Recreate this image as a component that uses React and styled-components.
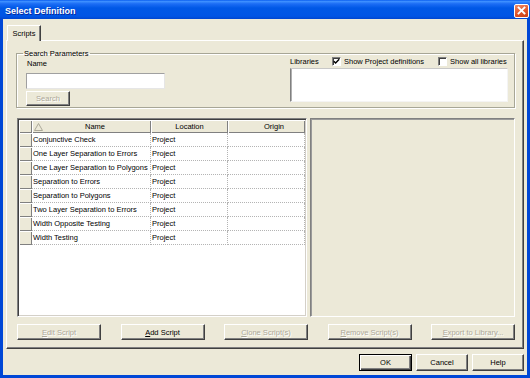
import React from 'react';
import styled, { createGlobalStyle } from 'styled-components';

const Global = createGlobalStyle`
  html, body { margin: 0; padding: 0; }
  body { font-family: "Liberation Sans", Arial, sans-serif; font-size: 7.5px; color: #000; }
  * { box-sizing: border-box; }
`;

const BG = '#ECE9D8';

const Win = styled.div`
  width: 530px;
  height: 378px;
  display: flex;
  flex-direction: column;
  overflow: hidden;
`;

const TitleBar = styled.div`
  height: 19px;
  flex: none;
  display: flex;
  align-items: center;
  justify-content: space-between;
  padding: 2px 1px 0 5px;
  background: linear-gradient(180deg, #0A5EF0 0%, #3D8FFF 8%, #1C6DF5 20%, #0058E6 42%, #0055E5 85%, #0046D0 100%);
`;

const Title = styled.div`
  color: #fff;
  font-weight: bold;
  font-size: 9px;
  text-shadow: 1px 1px 0 #0A2A9C;
`;

const CloseBtn = styled.div`
  width: 15px;
  height: 14px;
  border: 1px solid #fff;
  border-radius: 2px;
  background: linear-gradient(160deg, #F08C68 0%, #E0552A 55%, #C63E14 100%);
  display: flex;
  align-items: center;
  justify-content: center;
`;

const Client = styled.div`
  flex: 1;
  display: flex;
  flex-direction: column;
  background: ${BG};
  border: 3px solid #0047D6;
  border-top: none;
  padding: 6px 3px 4px 3px;
`;

const TabStrip = styled.div`
  display: flex;
  padding-left: 1px;
  flex: none;
`;

const Tab = styled.div`
  position: relative;
  z-index: 1;
  width: 34px;
  height: 16px;
  margin-bottom: -1px;
  background: ${BG};
  border-top: 1px solid #fff;
  border-left: 1px solid #fff;
  border-right: 1px solid #404040;
  box-shadow: inset -1px 0 0 #808080;
  display: flex;
  align-items: center;
  justify-content: center;
  padding-bottom: 1px;
`;

const Panel = styled.div`
  flex: 1;
  display: flex;
  flex-direction: column;
  border: 1px solid;
  border-color: #fff #404040 #404040 #fff;
  box-shadow: inset -1px -1px 0 #808080;
  padding: 8px 8px 8px 9px;
  min-height: 0;
`;

const Group = styled.fieldset`
  margin: 0;
  min-width: 0;
  height: 59px;
  flex: none;
  padding: 0 6px 1px 9px;
  border: 1px solid #A7A696;
  box-shadow: 1px 1px 0 #fff, inset 1px 1px 0 #fff;
  display: flex;
  justify-content: space-between;
  align-items: flex-start;
`;

const Legend = styled.legend`
  font-size: 7.5px;
  line-height: 9px;
  padding: 0 1px;
  margin-left: -3px;
`;

const Col = styled.div`
  display: flex;
  flex-direction: column;
  align-items: flex-start;
  width: ${p => p.$w}px;
`;

const Label = styled.div`
  line-height: 9px;
  margin: 1px 0 0 1px;
`;

const TextInput = styled.div`
  width: 139px;
  height: 16px;
  margin-top: 5px;
  background: #fff;
  border: 1px solid;
  border-color: #A0A0A0 #E6E6E6 #E6E6E6 #A0A0A0;
`;

const LibRow = styled.div`
  height: 10px;
  margin-top: -2px;
  width: 100%;
  display: flex;
  align-items: center;
`;

const LibLabel = styled.span`
  width: 42px;
`;

const CheckWrap = styled.span`
  display: flex;
  align-items: center;
  gap: 3px;
  margin-right: ${p => p.$mr || 0}px;
`;

const Box = styled.span`
  width: 9px;
  height: 9px;
  background: #fff;
  border: 1px solid;
  border-color: #808080 #fff #fff #808080;
  box-shadow: inset 1px 1px 0 #404040;
  display: flex;
  align-items: center;
  justify-content: center;
`;

const ListBox = styled.div`
  width: 218px;
  height: 34px;
  margin-top: 2px;
  background: #fff;
  border: 1px solid;
  border-color: #C8C8C8 #F4F4F4 #F4F4F4 #808080;
  box-shadow: inset 1px 0 0 #B0B0B0;
`;

const Btn = styled.button`
  width: ${p => p.$w}px;
  height: ${p => p.$h || 16}px;
  margin-top: ${p => p.$mt || 0}px;
  padding: 0;
  font-family: inherit;
  font-size: 7.5px;
  background: ${BG};
  border: 1px solid;
  border-color: ${p => (p.$default ? '#000' : '#fff #404040 #404040 #fff')};
  box-shadow: ${p =>
    p.$default
      ? 'inset 1px 1px 0 #fff, inset -1px -1px 0 #404040, inset -2px -2px 0 #808080'
      : 'inset -1px -1px 0 #808080'};
  color: ${p => (p.disabled ? '#ACA899' : '#000')};
  text-shadow: ${p => (p.disabled ? '1px 1px 0 #fff' : 'none')};
  display: flex;
  align-items: center;
  justify-content: center;
  white-space: nowrap;
`;

const GridRow = styled.div`
  flex: 1;
  display: flex;
  gap: 3px;
  margin-top: 10px;
  margin-left: 1px;
  min-height: 0;
`;

const DataGrid = styled.div`
  width: 290px;
  background: #fff;
  border: 1px solid;
  border-color: #808080 #fff #fff #808080;
  box-shadow: inset 1px 1px 0 #404040, inset -1px -1px 0 #D4D0C8;
  padding: 1px;
`;

const Table = styled.div`
  display: grid;
  grid-template-columns: 13px 119px 77px 77px;
  grid-template-rows: 13px;
  grid-auto-rows: 14px;
`;

const HeadCell = styled.div`
  background: ${BG};
  box-shadow: inset 1px 1px 0 #fff, inset -1px -1px 0 #808080;
  display: flex;
  align-items: center;
  justify-content: center;
  padding-left: ${p => p.$pl || 0}px;
  position: relative;
  line-height: 13px;
`;

const SortMark = styled.svg`
  position: absolute;
  left: 2px;
  top: 3px;
`;

const Cell = styled.div`
  border-right: 1px dotted #B4B4B4;
  border-bottom: 1px dotted #B4B4B4;
  padding-left: 1px;
  line-height: 13px;
  white-space: nowrap;
  overflow: hidden;
`;

const SidePanel = styled.div`
  flex: 1;
  border: 1px solid;
  border-color: #808080 #fff #fff #808080;
  box-shadow: inset 1px 1px 0 #9A9A9A;
`;

const ActionRow = styled.div`
  display: flex;
  justify-content: space-between;
  margin-top: 7px;
  margin-left: 1px;
  flex: none;
`;

const DialogRow = styled.div`
  display: flex;
  justify-content: flex-end;
  gap: 4px;
  margin-top: 5px;
  flex: none;
`;

const U = styled.span`
  text-decoration: underline;
`;

const rows = [
  'Conjunctive Check',
  'One Layer Separation to Errors',
  'One Layer Separation to Polygons',
  'Separation to Errors',
  'Separation to Polygons',
  'Two Layer Separation to Errors',
  'Width Opposite Testing',
  'Width Testing',
];

const Check = ({ checked }) => (
  <Box>
    {checked && (
      <svg width="7" height="7" viewBox="0 0 7 7">
        <path d="M0.8 3.2 L2.6 5 L6.2 1.2" stroke="#000" strokeWidth="1.4" fill="none" />
      </svg>
    )}
  </Box>
);

export default function App() {
  return (
    <>
      <Global />
      <Win>
        <TitleBar>
          <Title>Select Definition</Title>
          <CloseBtn>
            <svg width="9" height="9" viewBox="0 0 9 9">
              <path d="M1.5 1.5 L7.5 7.5 M7.5 1.5 L1.5 7.5" stroke="#fff" strokeWidth="1.8" strokeLinecap="square" />
            </svg>
          </CloseBtn>
        </TitleBar>
        <Client>
          <TabStrip>
            <Tab>Scripts</Tab>
          </TabStrip>
          <Panel>
            <Group>
              <Legend>Search Parameters</Legend>
              <Col $w={139}>
                <Label>Name</Label>
                <TextInput />
                <Btn $w={44} $h={15} $mt={2} disabled>Search</Btn>
              </Col>
              <Col $w={218}>
                <LibRow>
                  <LibLabel>Libraries</LibLabel>
                  <CheckWrap $mr={14}>
                    <Check checked />
                    <span>Show Project definitions</span>
                  </CheckWrap>
                  <CheckWrap>
                    <Check />
                    <span>Show all libraries</span>
                  </CheckWrap>
                </LibRow>
                <ListBox />
              </Col>
            </Group>
            <GridRow>
              <DataGrid>
                <Table>
                  <HeadCell />
                  <HeadCell $pl={7}>
                    <SortMark width="9" height="8" viewBox="0 0 9 8">
                      <path d="M4.5 0.5 L0.5 7.5 L8.5 7.5 Z" fill="none" stroke="#ACA899" strokeWidth="1" />
                    </SortMark>
                    Name
                  </HeadCell>
                  <HeadCell>Location</HeadCell>
                  <HeadCell $pl={15}>Origin</HeadCell>
                  {rows.map(r => (
                    <React.Fragment key={r}>
                      <HeadCell />
                      <Cell>{r}</Cell>
                      <Cell>Project</Cell>
                      <Cell />
                    </React.Fragment>
                  ))}
                </Table>
              </DataGrid>
              <SidePanel />
            </GridRow>
            <ActionRow>
              <Btn $w={84} disabled><U>E</U>dit Script</Btn>
              <Btn $w={84}><U>A</U>dd Script</Btn>
              <Btn $w={84} disabled><U>C</U>lone Script(s)</Btn>
              <Btn $w={84} disabled><U>R</U>emove Script(s)</Btn>
              <Btn $w={84} disabled><U>E</U>xport to Library...</Btn>
            </ActionRow>
          </Panel>
          <DialogRow>
            <Btn $w={53} $h={17} $default>OK</Btn>
            <Btn $w={52} $h={17}>Cancel</Btn>
            <Btn $w={52} $h={17}>Help</Btn>
          </DialogRow>
        </Client>
      </Win>
    </>
  );
}
